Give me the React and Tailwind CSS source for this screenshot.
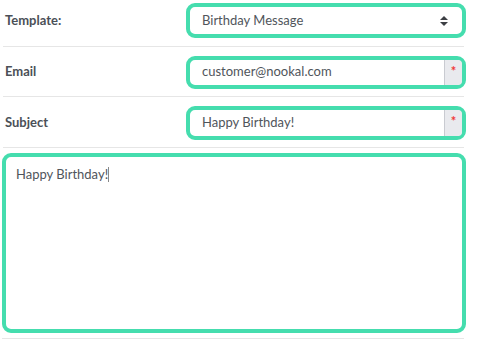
const green = 'border-[4px] border-[#45ddae] rounded-[9px]'

function Required() {
  return (
    <div className="w-[18px] self-stretch bg-[#e9eaee] border-l border-[#c9cbd1] rounded-r-[4px] flex justify-center pt-[5px]">
      <span className="text-[#f03838] text-[13px] leading-none font-bold">*</span>
    </div>
  )
}

function Row({ label, children, className }) {
  return (
    <div className={`flex items-center border-b border-[#e6e6e6] ${className}`}>
      <div className="w-[183px] pl-[2px] text-[13px] font-bold text-[#4b5057]">{label}</div>
      <div className="flex-1 -mr-[2px]">{children}</div>
    </div>
  )
}

export default function App() {
  return (
    <div className="w-[477px] h-[342px] bg-white pl-[3px] pr-[13px]" style={{ fontFamily: 'Lato, "Open Sans", sans-serif' }}>
      <Row label="Template:" className="h-[47px] pb-[5px]">
        <div className={`${green} h-[35px] flex items-center justify-between pl-[12px] pr-[14px] text-[13px] text-[#50555b]`}>
          <span>Birthday Message</span>
          <svg width="8" height="10" viewBox="0 0 8 10" className="text-[#3c3f44]">
            <path d="M4 0 L8 4 H0 Z M0 6 H8 L4 10 Z" fill="currentColor" />
          </svg>
        </div>
      </Row>
      <Row label="Email" className="h-[50px] pt-[1px]">
        <div className={`${green} h-[33px] flex items-stretch text-[13px] text-[#50555b]`}>
          <div className="flex-1 flex items-center pl-[12px]">customer@nookal.com</div>
          <Required />
        </div>
      </Row>
      <Row label="Subject" className="h-[51px] pt-[1px]">
        <div className={`${green} h-[34px] flex items-stretch text-[13px] text-[#50555b]`}>
          <div className="flex-1 flex items-center pl-[12px]">Happy Birthday!</div>
          <Required />
        </div>
      </Row>
      <div className="pt-[5px] pb-[5px] border-b border-[#e6e6e6] -ml-[1px]">
        <div className={`${green} h-[180px] w-[464px] pl-[10px] pt-[8px] text-[13px] text-[#50555b]`}>
          Happy Birthday!<span className="inline-block w-px h-[15px] bg-[#888] align-[-3px]"></span>
        </div>
      </div>
    </div>
  )
}
